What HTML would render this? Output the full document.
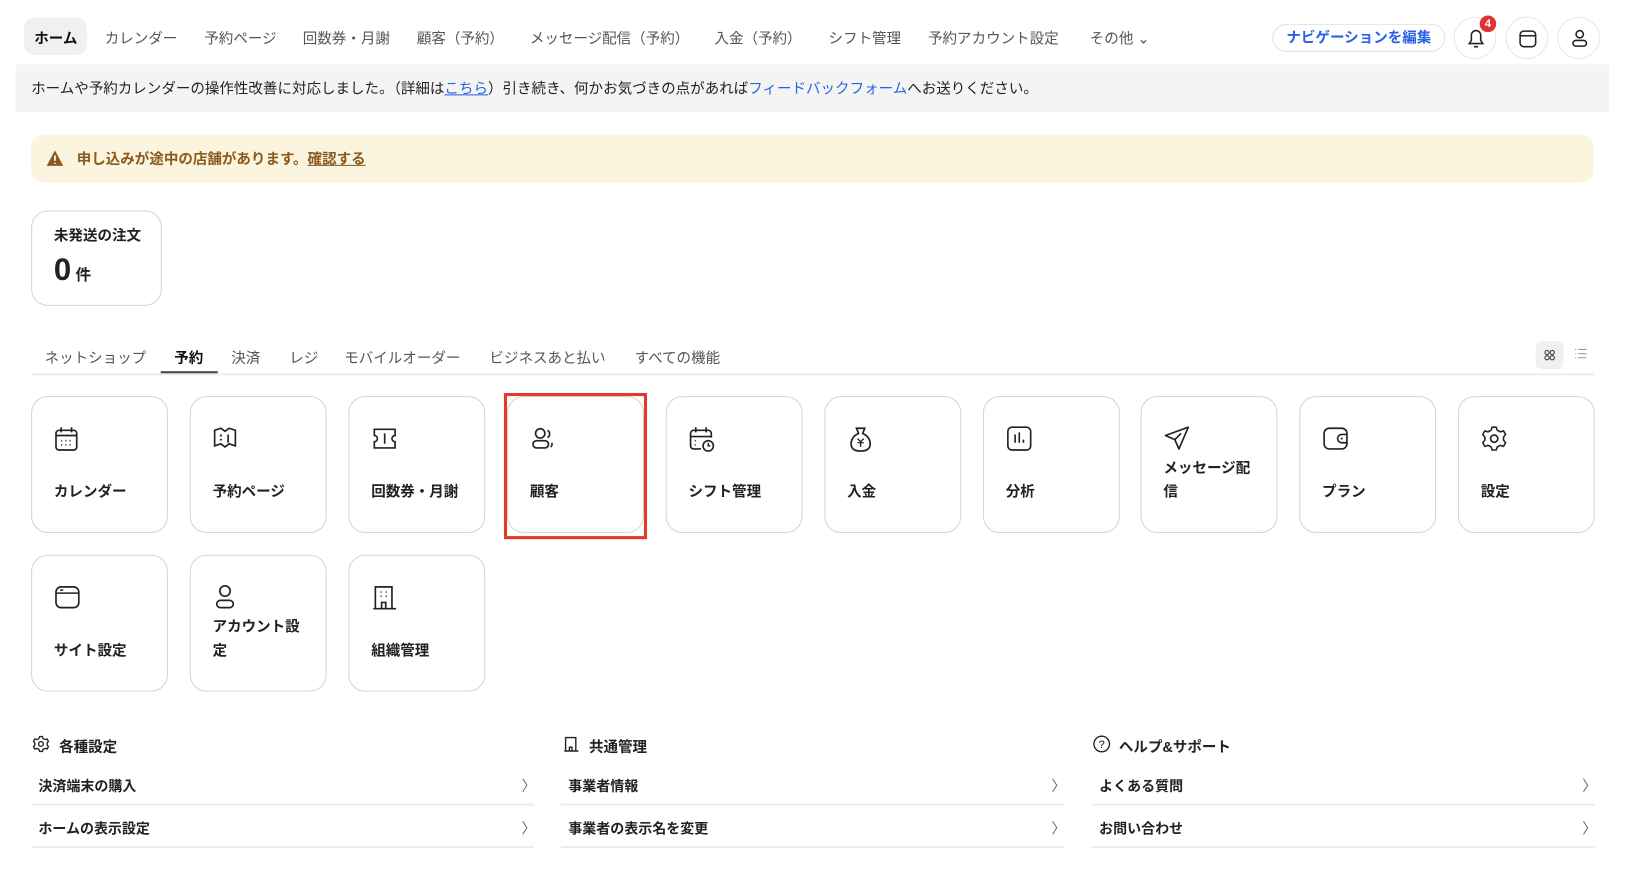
<!DOCTYPE html>
<html><head><meta charset="utf-8">
<style>
*{box-sizing:border-box;margin:0;padding:0}
html,body{width:1626px;height:886px;overflow:hidden;background:#fff}
body{font-family:"Liberation Sans","Noto Sans CJK JP",sans-serif;color:#222}
#w{width:1560px;height:855px;transform:scale(1.0369);transform-origin:0 0;position:relative}
.a{position:absolute}
.nav{font-size:14px;color:#555;top:27px}
.pill{left:23px;top:17px;width:61px;height:36px;background:#f1f0ee;border-radius:10px}
.note{left:15px;top:62px;width:1537px;height:46px;background:#f4f4f3;font-size:14px;line-height:46px;padding-left:15px;color:#222}
.note a{color:#2a62e6;text-decoration:none}
.warn{left:30px;top:130px;width:1507px;height:46px;background:#fbf4df;border-radius:12px;font-size:14px;line-height:46px;padding-left:44px;color:#8a5a1e;font-weight:bold}
.card{border:1.5px solid #d6d4d0;border-radius:16px;background:#fff}
.tile{width:132px;height:132px}
.tile svg{position:absolute;left:21px;top:27px}
.tile span{position:absolute;left:21px;top:80px;font-size:14px;font-weight:bold;color:#222;line-height:23px;width:96px}
.tab{top:335px;font-size:14px;color:#555}
.sec{font-size:14px;font-weight:bold}
.row{font-size:13.5px;font-weight:bold;color:#222}
.line{height:2px;background:#ececec;width:485px}
.chev{font-size:14px;color:#666}
.ibtn{top:16px;width:41px;height:41px;border:1.5px solid #e6e6e6;border-radius:50%}
</style></head><body><div id="w">
<div class="a pill"></div>
<div class="a nav" style="left:33px;color:#111;font-weight:bold">ホーム</div>
<div class="a nav" style="left:101px">カレンダー</div>
<div class="a nav" style="left:197px">予約ページ</div>
<div class="a nav" style="left:292px">回数券・月謝</div>
<div class="a nav" style="left:402px">顧客（予約）</div>
<div class="a nav" style="left:511px">メッセージ配信（予約）</div>
<div class="a nav" style="left:689px">入金（予約）</div>
<div class="a nav" style="left:799px">シフト管理</div>
<div class="a nav" style="left:895px">予約アカウント設定</div>
<div class="a nav" style="left:1051px">その他 ⌄</div>
<div class="a" style="left:1227px;top:23px;width:167px;height:27px;border:1.5px solid #e3e3e3;border-radius:14px;color:#2a62e6;font-size:14px;font-weight:bold;text-align:center;line-height:24px">ナビゲーションを編集</div>
<div class="a ibtn" style="left:1402px"><svg width="41" height="41" viewBox="0 0 41 41"><path d="M14 25h13l-2-3v-5a4.5 4.5 0 0 0-9 0v5z M18.5 28h4" fill="none" stroke="#222" stroke-width="1.5"/></svg></div>
<div class="a" style="left:1427px;top:15px;width:16px;height:16px;border-radius:50%;background:#d33;color:#fff;font-size:11px;font-weight:bold;text-align:center;line-height:16px">4</div>
<div class="a ibtn" style="left:1452px"><svg width="41" height="41" viewBox="0 0 41 41"><rect x="13" y="13" width="15" height="15" rx="3.5" fill="none" stroke="#222" stroke-width="1.5"/><path d="M13 17.5h15" stroke="#222" stroke-width="1.5"/></svg></div>
<div class="a ibtn" style="left:1502px"><svg width="41" height="41" viewBox="0 0 41 41"><circle cx="20.5" cy="16" r="3.5" fill="none" stroke="#222" stroke-width="1.5"/><rect x="14" y="22" width="13" height="5.5" rx="2.75" fill="none" stroke="#222" stroke-width="1.5"/></svg></div>
<div class="a note">ホームや予約カレンダーの操作性改善に対応しました。（詳細は<a style="text-decoration:underline">こちら</a>）引き続き、何かお気づきの点があれば<a>フィードバックフォーム</a>へお送りください。</div>
<div class="a warn">申し込みが途中の店舗があります。<u>確認する</u></div>
<svg class="a" style="left:44px;top:144px" width="18" height="17" viewBox="0 0 18 17"><path d="M9 1L17 16H1z" fill="#8a5a1e"/><path d="M9 6v5M9 13v1" stroke="#fbf4df" stroke-width="1.8"/></svg>
<div class="a card" style="left:30px;top:203px;width:126px;height:92px"></div>
<div class="a" style="left:52px;top:217px;font-size:14px;font-weight:bold">未発送の注文</div>
<div class="a" style="left:52px;top:244px;font-size:30px;font-weight:bold">0<span style="font-size:15px;font-weight:bold"> 件</span></div>
<div class="a tab" style="left:43px">ネットショップ</div>
<div class="a tab" style="left:168px;color:#111;font-weight:bold">予約</div>
<div class="a tab" style="left:223px">決済</div>
<div class="a tab" style="left:279px">レジ</div>
<div class="a tab" style="left:332px">モバイルオーダー</div>
<div class="a tab" style="left:472px">ビジネスあと払い</div>
<div class="a tab" style="left:612px">すべての機能</div>
<div class="a" style="left:30px;top:360px;width:1507px;height:1.5px;background:#eee"></div>
<div class="a" style="left:155px;top:358px;width:55px;height:2px;background:#444"></div>
<div class="a" style="left:1481px;top:329px;width:27px;height:27px;background:#f1f0ee;border-radius:6px"><svg width="27" height="27" viewBox="0 0 27 27"><g fill="none" stroke="#444" stroke-width="1.1"><circle cx="11" cy="11" r="2"/><circle cx="16" cy="11" r="2"/><circle cx="11" cy="16" r="2"/><circle cx="16" cy="16" r="2"/></g></svg></div>
<svg class="a" style="left:1517px;top:334px" width="14" height="14" viewBox="0 0 14 14"><path d="M2 3h1M5 3h8M2 7h1M5 7h8M2 11h1M5 11h8" stroke="#999" stroke-width="1"/></svg>

<div class="a card tile" style="left:30px;top:382px"><svg width="24" height="26" viewBox="0 0 24 26"><rect x="2" y="5" width="20" height="19" rx="3" fill="none" stroke="#222" stroke-width="1.6"/><path d="M2 10h20M7 2v5M17 2v5M7 15h1M11 15h1M15 15h1M7 19h1M11 19h1M15 19h1" stroke="#222" stroke-width="1.6"/></svg><span>カレンダー</span></div>
<div class="a card tile" style="left:183px;top:382px"><svg width="24" height="26" viewBox="0 0 24 26"><path d="M2 5l6-2 4 3 4-3 6 2v15l-6-2-4 3-4-3-6 2z" fill="none" stroke="#222" stroke-width="1.6"/><path d="M7 10h2M7 14h2M15 9v8" stroke="#222" stroke-width="1.6"/></svg><span>予約ページ</span></div>
<div class="a card tile" style="left:336px;top:382px"><svg width="26" height="26" viewBox="0 0 26 26"><path d="M3 4h20v6a3 3 0 0 0 0 6v6H3v-6a3 3 0 0 0 0-6z" fill="none" stroke="#222" stroke-width="1.6"/><path d="M13 8v10" stroke="#222" stroke-width="1.6"/></svg><span>回数券・月謝</span></div>
<div class="a card tile" style="left:489px;top:382px"><svg width="26" height="26" viewBox="0 0 26 26"><circle cx="10" cy="8" r="4.5" fill="none" stroke="#222" stroke-width="1.6"/><rect x="3" y="15" width="15" height="7" rx="3.5" fill="none" stroke="#222" stroke-width="1.6"/><path d="M17 5a4 4 0 0 1 0 7M21 17a3 3 0 0 1-1 4" fill="none" stroke="#222" stroke-width="1.6"/></svg><span>顧客</span></div>
<div class="a" style="left:486px;top:379px;width:138px;height:141px;border:3px solid #e33a2c"></div>
<div class="a card tile" style="left:642px;top:382px"><svg width="26" height="28" viewBox="0 0 26 28"><path d="M12 23H5a3 3 0 0 1-3-3V8a3 3 0 0 1 3-3h14a3 3 0 0 1 3 3v4M2 11h20M7 2v5M17 2v5M6 15h1M6 19h1" fill="none" stroke="#222" stroke-width="1.6"/><circle cx="19" cy="20" r="5" fill="none" stroke="#222" stroke-width="1.6"/><path d="M19 17v3h2" fill="none" stroke="#222" stroke-width="1.4"/></svg><span>シフト管理</span></div>
<div class="a card tile" style="left:795px;top:382px"><svg width="26" height="28" viewBox="0 0 26 28"><path d="M9 3h8l-2 5c5 2 8 7 7 12-1 4-5 5-9 5s-8-1-9-5c-1-5 2-10 7-12z" fill="none" stroke="#222" stroke-width="1.6"/><path d="M10 13l3 3 3-3M13 16v5M10 17h6" fill="none" stroke="#222" stroke-width="1.3"/></svg><span>入金</span></div>
<div class="a card tile" style="left:948px;top:382px"><svg width="26" height="26" viewBox="0 0 26 26"><rect x="2" y="2" width="22" height="22" rx="4" fill="none" stroke="#222" stroke-width="1.6"/><path d="M9 17V9M13 17V7M17 17v-3" stroke="#222" stroke-width="1.6"/></svg><span>分析</span></div>
<div class="a card tile" style="left:1100px;top:382px"><svg width="26" height="26" viewBox="0 0 26 26"><path d="M24 2L2 10l9 4 4 9z M11 14l6-6" fill="none" stroke="#222" stroke-width="1.6" stroke-linejoin="round"/></svg><span style="top:57px">メッセージ配信</span></div>
<div class="a card tile" style="left:1253px;top:382px"><svg width="26" height="26" viewBox="0 0 26 26"><rect x="2" y="3" width="22" height="20" rx="5" fill="none" stroke="#222" stroke-width="1.6"/><path d="M24 9h-5a4 4 0 0 0 0 8h5" fill="none" stroke="#222" stroke-width="1.6"/><circle cx="19" cy="13" r="1" fill="#222"/></svg><span>プラン</span></div>
<div class="a card tile" style="left:1406px;top:382px"><svg width="26" height="26" viewBox="0 0 26 26"><path d="M11 2h4l1 3 3 1.5 3-1 2 3.5-2 2.5v3l2 2.5-2 3.5-3-1-3 1.5-1 3h-4l-1-3-3-1.5-3 1-2-3.5 2-2.5v-3l-2-2.5 2-3.5 3 1L10 5z" fill="none" stroke="#222" stroke-width="1.5" stroke-linejoin="round"/><circle cx="13" cy="13" r="3.5" fill="none" stroke="#222" stroke-width="1.6"/></svg><span>設定</span></div>

<div class="a card tile" style="left:30px;top:535px"><svg width="26" height="26" viewBox="0 0 26 26"><rect x="2" y="3" width="22" height="20" rx="5" fill="none" stroke="#222" stroke-width="1.6"/><path d="M2 9h22M6 6h3" stroke="#222" stroke-width="1.4"/></svg><span>サイト設定</span></div>
<div class="a card tile" style="left:183px;top:535px"><svg width="26" height="26" viewBox="0 0 26 26"><circle cx="12" cy="7" r="5" fill="none" stroke="#222" stroke-width="1.6"/><rect x="4" y="16" width="16" height="7" rx="3.5" fill="none" stroke="#222" stroke-width="1.6"/></svg><span style="top:57px">アカウント設定</span></div>
<div class="a card tile" style="left:336px;top:535px"><svg width="26" height="26" viewBox="0 0 26 26"><path d="M4 24V3h16v21M2 24h22M10 24v-6h4v6M9 8h1M14 8h1M9 12h1M14 12h1" fill="none" stroke="#222" stroke-width="1.6"/></svg><span>組織管理</span></div>

<svg class="a" style="left:31px;top:709px" width="17" height="17" viewBox="0 0 26 26"><path d="M11 2h4l1 3 3 1.5 3-1 2 3.5-2 2.5v3l2 2.5-2 3.5-3-1-3 1.5-1 3h-4l-1-3-3-1.5-3 1-2-3.5 2-2.5v-3l-2-2.5 2-3.5 3 1L10 5z" fill="none" stroke="#222" stroke-width="2"/><circle cx="13" cy="13" r="3.5" fill="none" stroke="#222" stroke-width="2"/></svg>
<div class="a sec" style="left:57px;top:710px">各種設定</div>
<svg class="a" style="left:543px;top:709px" width="16" height="17" viewBox="0 0 26 26"><path d="M4 24V3h16v21M2 24h22M10 24v-6h4v6" fill="none" stroke="#222" stroke-width="2.2"/></svg>
<div class="a sec" style="left:568px;top:710px">共通管理</div>
<svg class="a" style="left:1054px;top:709px" width="17" height="17" viewBox="0 0 17 17"><circle cx="8.5" cy="8.5" r="7.5" fill="none" stroke="#222" stroke-width="1.3"/><text x="8.5" y="12.5" font-size="11" text-anchor="middle" fill="#222" font-family="Liberation Sans">?</text></svg>
<div class="a sec" style="left:1079px;top:710px">ヘルプ&amp;サポート</div>

<div class="a row" style="left:37px;top:747px">決済端末の購入</div>
<div class="a row" style="left:37px;top:788px">ホームの表示設定</div>
<div class="a row" style="left:548px;top:747px">事業者情報</div>
<div class="a row" style="left:548px;top:788px">事業者の表示名を変更</div>
<div class="a row" style="left:1060px;top:747px">よくある質問</div>
<div class="a row" style="left:1060px;top:788px">お問い合わせ</div>
<div class="a chev" style="left:503px;top:748px">〉</div><div class="a chev" style="left:503px;top:789px">〉</div>
<div class="a chev" style="left:1014px;top:748px">〉</div><div class="a chev" style="left:1014px;top:789px">〉</div>
<div class="a chev" style="left:1526px;top:748px">〉</div><div class="a chev" style="left:1526px;top:789px">〉</div>
<div class="a line" style="left:30px;top:775px"></div><div class="a line" style="left:30px;top:816px"></div>
<div class="a line" style="left:541px;top:775px"></div><div class="a line" style="left:541px;top:816px"></div>
<div class="a line" style="left:1053px;top:775px"></div><div class="a line" style="left:1053px;top:816px"></div>
</div></body></html>
